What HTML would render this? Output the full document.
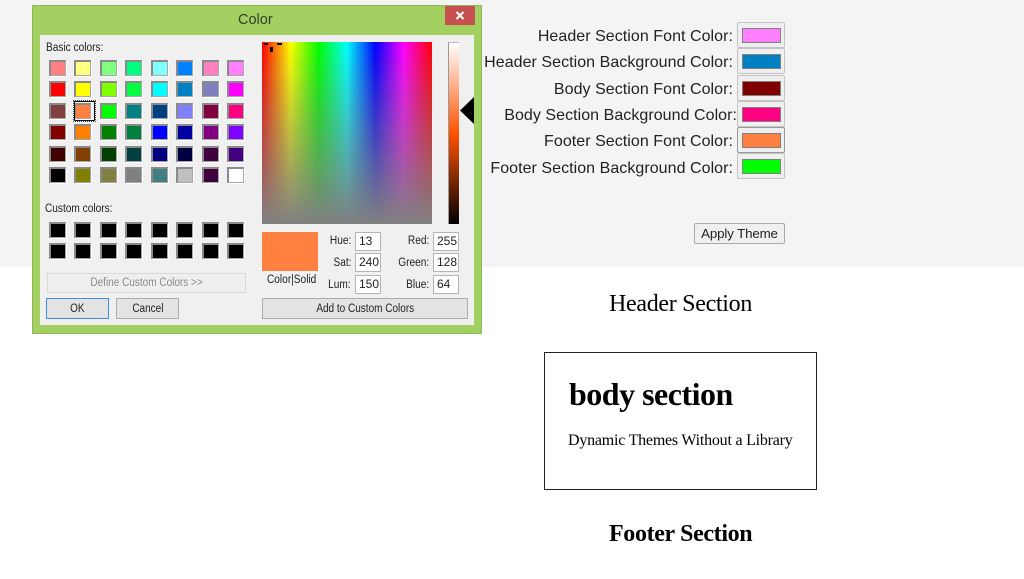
<!DOCTYPE html>
<html><head><meta charset="utf-8"><title>Color</title>
<style>
html,body{margin:0;padding:0;background:#fff}
body{width:1024px;height:579px;position:relative;overflow:hidden;font-family:"Liberation Sans",sans-serif}
.a{position:absolute}
#top{left:0;top:0;width:1024px;height:267px;background:#f4f4f4}
#dlg{left:32px;top:5px;width:448px;height:327px;background:#a2d161;border:1px solid #8fb858;box-sizing:content-box}
#in{left:40px;top:35px;width:434px;height:290px;background:#f0f0f0;border:0}
.t{position:absolute;white-space:nowrap;color:#222;font-size:11.5px;line-height:14px;transform:scaleX(.88);transform-origin:left center}
.grid{position:absolute;left:49px;display:grid;grid-template-columns:repeat(8,25.43px);}
.s{width:17px;height:16px;box-sizing:border-box;border-style:solid;border-width:2px 1px 1px 2px;border-color:#8a8a8a #a8a8a8 #a8a8a8 #8a8a8a;box-shadow:1px 1px 0 #fff}
.c{height:21.4px}
.btn{position:absolute;box-sizing:border-box;background:#e3e3e3;border:1px solid #adadad;text-align:center;font-size:11.5px;color:#222;white-space:nowrap}
.btn span{display:inline-block;transform:scaleX(.87)}
.inp{position:absolute;box-sizing:border-box;width:26px;height:19px;background:#fff;border:1px solid #b5b5b5;font-size:12px;line-height:17px;padding-left:3px;color:#222}
.r{position:absolute;text-align:right;font-size:11.5px;line-height:14px;color:#222;white-space:nowrap;transform:scaleX(.88);transform-origin:right center}
.lb{position:absolute;right:291px;font-size:16px;line-height:22px;color:#222;white-space:nowrap;letter-spacing:.05px}
.sb{position:absolute;left:737px;width:48px;height:26px;box-sizing:border-box;background:#efefef;border:1px solid #c4c4c4;border-radius:2px}
.sb i{position:absolute;left:4px;top:5px;width:39px;height:15px;box-sizing:border-box;border:1px solid #808080}
.se{position:absolute;font-family:"Liberation Serif",serif;color:#000;white-space:nowrap}
</style></head><body>
<div class="a" id="top"></div>
<div class="a" id="dlg"></div>
<div class="a" id="in"></div>
<div class="a" style="left:238px;top:12px;font-size:14.5px;line-height:17px;color:#333d28">Color</div>
<div class="a" style="left:445px;top:6px;width:30px;height:19px;background:#c75050"></div>
<svg class="a" style="left:445px;top:6px" width="30" height="19"><path d="M11.5 6L18.5 13M18.5 6L11.5 13" stroke="#fff" stroke-width="2"/></svg>

<div class="t" style="left:45.5px;top:41px">Basic colors:</div>
<div class="grid c1" style="top:60px">
<div class="c"><div class="s" style="background:#ff8080"></div></div><div class="c"><div class="s" style="background:#ffff80"></div></div><div class="c"><div class="s" style="background:#80ff80"></div></div><div class="c"><div class="s" style="background:#00ff80"></div></div><div class="c"><div class="s" style="background:#80ffff"></div></div><div class="c"><div class="s" style="background:#0080ff"></div></div><div class="c"><div class="s" style="background:#ff80c0"></div></div><div class="c"><div class="s" style="background:#ff80ff"></div></div>
<div class="c"><div class="s" style="background:#ff0000"></div></div><div class="c"><div class="s" style="background:#ffff00"></div></div><div class="c"><div class="s" style="background:#80ff00"></div></div><div class="c"><div class="s" style="background:#00ff40"></div></div><div class="c"><div class="s" style="background:#00ffff"></div></div><div class="c"><div class="s" style="background:#0080c0"></div></div><div class="c"><div class="s" style="background:#8080c0"></div></div><div class="c"><div class="s" style="background:#ff00ff"></div></div>
<div class="c"><div class="s" style="background:#804040"></div></div><div class="c"><div class="s" style="background:#ff8040"></div></div><div class="c"><div class="s" style="background:#00ff00"></div></div><div class="c"><div class="s" style="background:#008080"></div></div><div class="c"><div class="s" style="background:#004080"></div></div><div class="c"><div class="s" style="background:#8080ff"></div></div><div class="c"><div class="s" style="background:#800040"></div></div><div class="c"><div class="s" style="background:#ff0080"></div></div>
<div class="c"><div class="s" style="background:#800000"></div></div><div class="c"><div class="s" style="background:#ff8000"></div></div><div class="c"><div class="s" style="background:#008000"></div></div><div class="c"><div class="s" style="background:#008040"></div></div><div class="c"><div class="s" style="background:#0000ff"></div></div><div class="c"><div class="s" style="background:#0000a0"></div></div><div class="c"><div class="s" style="background:#800080"></div></div><div class="c"><div class="s" style="background:#8000ff"></div></div>
<div class="c"><div class="s" style="background:#400000"></div></div><div class="c"><div class="s" style="background:#804000"></div></div><div class="c"><div class="s" style="background:#004000"></div></div><div class="c"><div class="s" style="background:#004040"></div></div><div class="c"><div class="s" style="background:#000080"></div></div><div class="c"><div class="s" style="background:#000040"></div></div><div class="c"><div class="s" style="background:#400040"></div></div><div class="c"><div class="s" style="background:#400080"></div></div>
<div class="c"><div class="s" style="background:#000000"></div></div><div class="c"><div class="s" style="background:#808000"></div></div><div class="c"><div class="s" style="background:#808040"></div></div><div class="c"><div class="s" style="background:#808080"></div></div><div class="c"><div class="s" style="background:#408080"></div></div><div class="c"><div class="s" style="background:#c0c0c0"></div></div><div class="c"><div class="s" style="background:#400040"></div></div><div class="c"><div class="s" style="background:#ffffff"></div></div>
</div>
<div class="a" style="left:73px;top:100px;width:23px;height:22px;box-sizing:border-box;border:1px dotted #444"></div>
<div class="a" style="left:74px;top:101px;width:21px;height:20px;box-sizing:border-box;border:1px solid #111"></div>

<div class="t" style="left:45px;top:202px">Custom colors:</div>
<div class="grid" style="top:221.5px">
<div class="c"><div class="s" style="background:#000"></div></div><div class="c"><div class="s" style="background:#000"></div></div><div class="c"><div class="s" style="background:#000"></div></div><div class="c"><div class="s" style="background:#000"></div></div><div class="c"><div class="s" style="background:#000"></div></div><div class="c"><div class="s" style="background:#000"></div></div><div class="c"><div class="s" style="background:#000"></div></div><div class="c"><div class="s" style="background:#000"></div></div>
<div class="c"><div class="s" style="background:#000"></div></div><div class="c"><div class="s" style="background:#000"></div></div><div class="c"><div class="s" style="background:#000"></div></div><div class="c"><div class="s" style="background:#000"></div></div><div class="c"><div class="s" style="background:#000"></div></div><div class="c"><div class="s" style="background:#000"></div></div><div class="c"><div class="s" style="background:#000"></div></div><div class="c"><div class="s" style="background:#000"></div></div>
</div>

<div class="btn" style="left:47px;top:273px;width:199px;height:20px;line-height:19px;background:#efefef;border-color:#d9d9d9;color:#8a8a8a"><span>Define Custom Colors &gt;&gt;</span></div>
<div class="btn" style="left:46px;top:298px;width:63px;height:21px;line-height:20px;border-color:#3d8fe0"><span>OK</span></div>
<div class="btn" style="left:116px;top:298px;width:63px;height:21px;line-height:20px"><span>Cancel</span></div>

<svg class="a" style="left:262px;top:42px" width="171" height="183">
<defs>
<linearGradient id="h" x1="0" x2="1" y1="0" y2="0">
<stop offset="0" stop-color="#ff0000"/><stop offset=".1667" stop-color="#ffff00"/><stop offset=".3333" stop-color="#00ff00"/><stop offset=".5" stop-color="#00ffff"/><stop offset=".6667" stop-color="#0000ff"/><stop offset=".8333" stop-color="#ff00ff"/><stop offset="1" stop-color="#ff0000"/>
</linearGradient>
<linearGradient id="v" x1="0" x2="0" y1="0" y2="1">
<stop offset="0" stop-color="#808080" stop-opacity="0"/><stop offset="1" stop-color="#808080" stop-opacity="1"/>
</linearGradient>
</defs>
<rect width="170" height="182" fill="url(#h)"/>
<rect width="170" height="182" fill="url(#v)"/>
<rect x="2" y="1" width="4" height="2" fill="#000"/><rect x="15" y="1" width="5" height="2" fill="#000"/><rect x="8" y="5" width="3" height="5" fill="#000"/>
</svg>
<div class="a" style="left:448px;top:42px;width:11px;height:182px;box-sizing:border-box;border-left:1px solid #999;border-top:1px solid #bbb;background:linear-gradient(#fff 0%,#ffa982 25%,#ff5300 50%,#000 100%)"></div>
<svg class="a" style="left:460px;top:97px" width="15" height="27"><path d="M0 13.5L14 0V27Z" fill="#000"/></svg>

<div class="a" style="left:262px;top:232px;width:56px;height:39px;background:#ff8040"></div>
<div class="t" style="left:267px;top:273px">Color|Solid</div>
<div class="r" style="right:673px;top:234px">Hue:</div>
<div class="r" style="right:673px;top:256px">Sat:</div>
<div class="r" style="right:673px;top:278px">Lum:</div>
<div class="inp" style="left:355px;top:232px">13</div>
<div class="inp" style="left:355px;top:253px">240</div>
<div class="inp" style="left:355px;top:275px">150</div>
<div class="r" style="right:595px;top:234px">Red:</div>
<div class="r" style="right:595px;top:256px">Green:</div>
<div class="r" style="right:595px;top:278px">Blue:</div>
<div class="inp" style="left:433px;top:232px">255</div>
<div class="inp" style="left:433px;top:253px">128</div>
<div class="inp" style="left:433px;top:275px">64</div>
<div class="btn" style="left:262px;top:298px;width:206px;height:21px;line-height:20px"><span>Add to Custom Colors</span></div>

<div class="lb" style="top:26px">Header Section Font Color:</div>
<div class="lb" style="top:52px">Header Section Background Color:</div>
<div class="lb" style="top:79px">Body Section Font Color:</div>
<div class="lb" style="top:105px;right:287px">Body Section Background Color:</div>
<div class="lb" style="top:131px">Footer Section Font Color:</div>
<div class="lb" style="top:158px">Footer Section Background Color:</div>

<div class="sb" style="top:22px"><i style="background:#ff80ff"></i></div>
<div class="sb" style="top:48px"><i style="background:#0080c0"></i></div>
<div class="sb" style="top:75px"><i style="background:#800000"></i></div>
<div class="sb" style="top:101px"><i style="background:#ff0080"></i></div>
<div class="sb" style="top:127px;border-color:#999"><i style="background:#ff8040"></i></div>
<div class="sb" style="top:153px"><i style="background:#00ff00"></i></div>

<div class="a" style="left:694px;top:223px;width:91px;height:21px;box-sizing:border-box;background:#f0f0f0;border:1px solid #aaa;border-radius:2px;text-align:center;font-size:13.33px;line-height:19px;color:#222;letter-spacing:-.15px">Apply Theme</div>

<div class="se" style="left:609px;top:291px;font-size:24px;line-height:27px;letter-spacing:-.3px">Header Section</div>
<div class="a" style="left:544px;top:352px;width:273px;height:138px;box-sizing:border-box;border:1px solid #222"></div>
<div class="se" style="left:569px;top:376px;font-size:32px;line-height:37px;font-weight:bold;letter-spacing:-.5px">body section</div>
<div class="se" style="left:568px;top:432px;font-size:16px;line-height:18px;letter-spacing:-.22px">Dynamic Themes Without a Library</div>
<div class="se" style="left:609px;top:521px;font-size:24px;line-height:27px;font-weight:bold;letter-spacing:-.35px">Footer Section</div>
</body></html>
